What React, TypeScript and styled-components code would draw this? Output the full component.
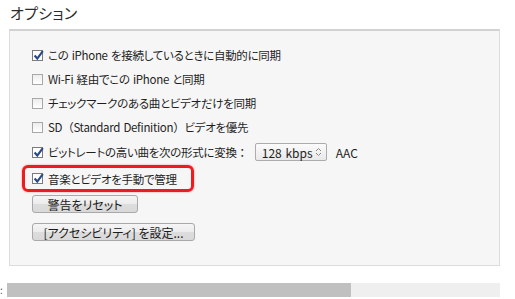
import React from 'react';
import styled, { createGlobalStyle } from 'styled-components';

const GlobalStyle = createGlobalStyle`
  html, body {
    margin: 0;
    padding: 0;
    background: #ffffff;
  }
  body {
    font-family: "Noto Sans CJK JP", "Noto Sans", sans-serif;
    color: #1e1e1e;
    font-feature-settings: "palt";
  }
`;

const Page = styled.div`
  width: 515px;
  height: 299px;
  overflow: hidden;
  display: flex;
  flex-direction: column;
`;

const Title = styled.div`
  height: 29px;
  padding-left: 10px;
  font-size: 15px;
  line-height: 26px;
  color: #2b2b2b;
  letter-spacing: 0.3px;
`;

const Panel = styled.div`
  margin-left: 9px;
  width: 491px;
  height: 237px;
  box-sizing: border-box;
  background: #f6f6f6;
  border: 1px solid #dcdcdc;
  border-top: 2px solid #d2d2d2;
  padding: 12px 0 0 22px;
  display: flex;
  flex-direction: column;
`;

const Row = styled.div<{ $h?: number }>`
  height: ${(p) => p.$h ?? 24}px;
  display: flex;
  align-items: center;
  gap: 5px;
  font-size: 11.5px;
  letter-spacing: -0.3px;
  word-spacing: 1px;
  white-space: nowrap;
`;

const HighlightRow = styled(Row)`
  margin-left: -10px;
  padding-left: 7px;
  width: 172px;
  box-sizing: border-box;
  border: 3px solid #ee1c1c;
  border-radius: 6px;
  box-shadow: 0 0 2px rgba(238, 28, 28, 0.5);
`;

const Wide = styled.span`
  font-feature-settings: normal;
`;

const Box = styled.span<{ $checked?: boolean }>`
  width: 11px;
  height: 11px;
  flex: none;
  box-sizing: border-box;
  border: 1px solid ${(p) => (p.$checked ? '#7b7b7b' : '#a8a8a8')};
  background: ${(p) => (p.$checked ? '#ffffff' : 'linear-gradient(#ededed, #ffffff)')};
  position: relative;
`;

const Check = styled.svg`
  position: absolute;
  left: 0;
  top: -1px;
  width: 11px;
  height: 11px;
`;

const Select = styled.span`
  margin-left: 2px;
  width: 72px;
  height: 18px;
  box-sizing: border-box;
  border: 1px solid #acacac;
  border-radius: 2px;
  background: linear-gradient(#fbfbfb, #e9e9e9);
  display: flex;
  align-items: center;
  justify-content: space-between;
  padding: 0 4px 0 6px;
  font-size: 12px;
  letter-spacing: 0;
`;

const Aac = styled.span`
  margin-left: 4px;
  font-size: 12px;
  letter-spacing: 0;
`;

const Button = styled.div<{ $w: number; $mt: number }>`
  width: ${(p) => p.$w}px;
  height: 18px;
  margin-top: ${(p) => p.$mt}px;
  box-sizing: border-box;
  border: 1px solid #a9a9a9;
  border-radius: 3px;
  background: linear-gradient(#f5f5f5 0%, #ececec 50%, #dddddd 51%, #d9d9d9 100%);
  display: flex;
  align-items: center;
  justify-content: center;
  font-size: 12px;
  color: #1a1a1a;
  white-space: nowrap;
`;

const Footer = styled.div`
  margin-top: 17px;
  height: 14px;
  display: flex;
  align-items: center;
`;

const Colon = styled.span`
  width: 7px;
  font-size: 10px;
  line-height: 14px;
  color: #555;
`;

const Track = styled.div`
  width: 493px;
  height: 14px;
  background: #efefef;
  display: flex;
`;

const Fill = styled.div`
  height: 100%;
  background: #c0c0c0;
`;

const CheckBox = ({ checked }: { checked?: boolean }) => (
  <Box $checked={checked}>
    {checked && (
      <Check viewBox="0 0 11 11">
        <path d="M1.6 5.6 L4.3 8.6 L9.8 1.2" fill="none" stroke="#2a4a86" strokeWidth="2.2" />
      </Check>
    )}
  </Box>
);

const Chevrons = () => (
  <svg width="7" height="10" viewBox="0 0 7 10">
    <path d="M1 4 L3.5 1.5 L6 4 M1 6 L3.5 8.5 L6 6" fill="none" stroke="#8a8a8a" strokeWidth="1" />
  </svg>
);

export default function App() {
  return (
    <Page>
      <GlobalStyle />
      <Title>オプション</Title>
      <Panel>
        <Row>
          <CheckBox checked />
          <span>この iPhone を接続しているときに自動的に同期</span>
        </Row>
        <Row>
          <CheckBox />
          <span>Wi-Fi 経由でこの iPhone と同期</span>
        </Row>
        <Row>
          <CheckBox />
          <span>チェックマークのある曲とビデオだけを同期</span>
        </Row>
        <Row>
          <CheckBox />
          <span>
            SD<Wide>（</Wide>Standard Definition<Wide>）</Wide>ビデオを優先
          </span>
        </Row>
        <Row $h={26}>
          <CheckBox checked />
          <span>
            ビットレートの高い曲を次の形式に変換<Wide>：</Wide>
          </span>
          <Select>
            <span>128 kbps</span>
            <Chevrons />
          </Select>
          <Aac>AAC</Aac>
        </Row>
        <HighlightRow $h={27}>
          <CheckBox checked />
          <span>音楽とビデオを手動で管理</span>
        </HighlightRow>
        <Button $w={106} $mt={3}>警告をリセット</Button>
        <Button $w={163} $mt={10}>[アクセシビリティ] を設定...</Button>
      </Panel>
      <Footer>
        <Colon>:</Colon>
        <Track>
          <Fill style={{ width: `${(344 / 493) * 100}%` }} />
        </Track>
      </Footer>
    </Page>
  );
}
